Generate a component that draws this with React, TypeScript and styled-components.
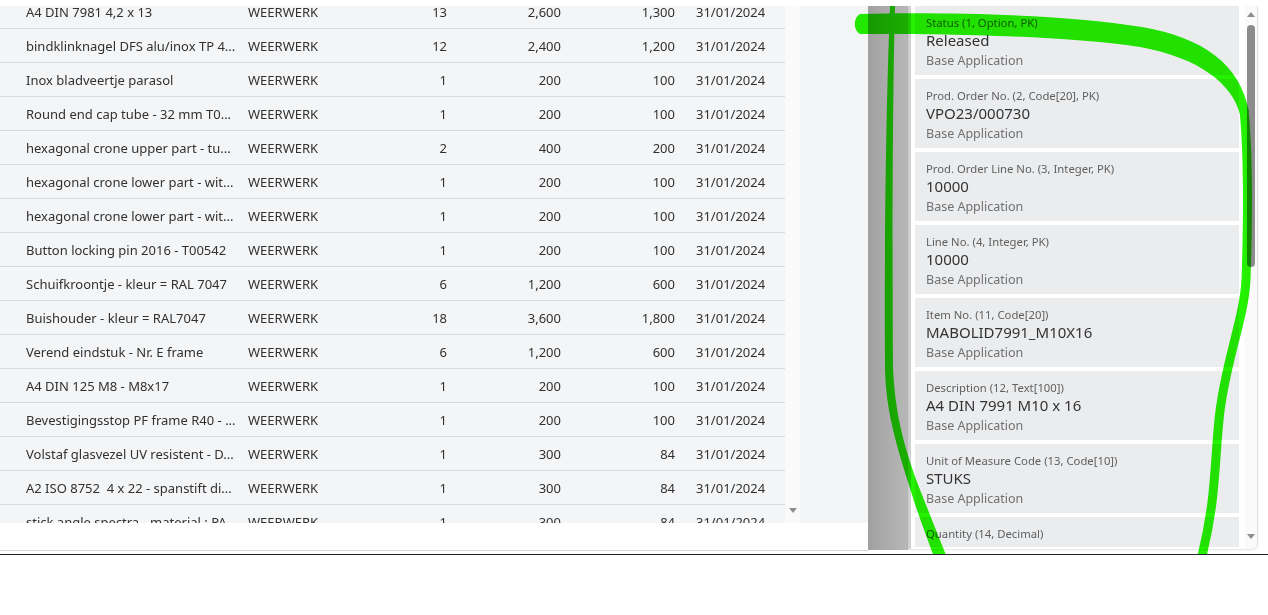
import styled, {createGlobalStyle} from "styled-components";

const GlobalStyle = createGlobalStyle`
  html, body {
    margin: 0;
    padding: 0;
    background: #fff;
  }
  body {
    font-family: "Noto Sans", "Open Sans", sans-serif;
    color: #323130;
  }
`;

const Page = styled.div`
  position: relative;
  width: 1268px;
  height: 615px;
  overflow: hidden;
  display: flex;
  flex-direction: column;
  background: #fff;
`;

const TopGap = styled.div`
  height: 6px;
  flex: none;
`;

const Workspace = styled.div`
  display: flex;
  height: 545px;
  flex: none;
`;

const ListPane = styled.div`
  width: 868px;
  display: flex;
  flex-direction: column;
`;

const ListBody = styled.div`
  height: 517px;
  display: flex;
  background: #f4f5f7;
`;

const Table = styled.div`
  width: 785px;
  overflow: hidden;
`;

// the list is scrolled a little, so the first row is cut at the top
const TableScroll = styled.div`
  margin-top: -11px;
`;

const Row = styled.div`
  display: grid;
  grid-template-columns: 222px 119px 80px 114px 114px 110px;
  align-items: center;
  height: 34px;
  box-sizing: border-box;
  padding-left: 26px;
  border-bottom: 1px solid #d7d8da;
  font-size: 13px;
  color: #323130;
`;

const Cell = styled.div<{ $align?: "left" | "right"; $pad?: number }>`
  text-align: ${p => p.$align ?? "left"};
  padding-left: ${p => p.$pad ?? 0}px;
  white-space: pre;
  overflow: hidden;
`;

const ScrollStrip = styled.div`
  width: 15px;
  background: #fafafa;
  display: flex;
  flex-direction: column;
  justify-content: flex-end;
  align-items: center;
  padding-bottom: 10px;
  box-sizing: border-box;
`;

const ArrowDown = styled.div`
  width: 0;
  height: 0;
  border-left: 4.5px solid transparent;
  border-right: 4.5px solid transparent;
  border-top: 5px solid #8e8e8e;
`;

const ArrowUp = styled.div`
  width: 0;
  height: 0;
  border-left: 4.5px solid transparent;
  border-right: 4.5px solid transparent;
  border-bottom: 5px solid #8e8e8e;
`;

const Filler = styled.div`
  flex: 1;
`;

const ListFooter = styled.div`
  height: 28px;
  box-sizing: border-box;
  border-bottom: 1px solid #d6d6d6;
  background: #fff;
`;

const Splitter = styled.div`
  width: 40px;
  height: 544px;
  background: linear-gradient(to right, #a0a0a0, #b8b8b8);
`;

const FieldPanel = styled.div`
  width: 350px;
  height: 543px;
  box-sizing: border-box;
  display: flex;
  background: #fff;
  border-left: 3px solid #cfd0d2;
  border-right: 1px solid #e2e2e2;
  border-bottom-right-radius: 6px;
  box-shadow: 0 1px 2px rgba(0, 0, 0, 0.12);
  overflow: hidden;
`;

const CardList = styled.div`
  width: 324px;
  height: 541px;
  margin-left: 4px;
  display: flex;
  flex-direction: column;
  gap: 4px;
  overflow: hidden;
`;

const Card = styled.div`
  flex: none;
  height: 69px;
  box-sizing: border-box;
  padding: 9px 11px 5px;
  background: #ebecee;
  display: flex;
  flex-direction: column;
`;

const FieldLabel = styled.div`
  font-size: 11.3px;
  line-height: 15px;
  color: #5f5f5f;
`;

const FieldValue = styled.div`
  font-size: 15px;
  line-height: 21px;
  min-height: 21px;
  color: #333;
`;

const FieldSource = styled.div`
  font-size: 12.5px;
  line-height: 19px;
  color: #707070;
`;

const PanelScrollbar = styled.div`
  width: 12px;
  margin-left: 6px;
  background: #fafafa;
  display: flex;
  flex-direction: column;
  align-items: center;
  padding: 6px 0 10px;
  box-sizing: border-box;
`;

const Thumb = styled.div`
  width: 8px;
  height: 242px;
  margin-top: 8px;
  border-radius: 4px;
  background: #8c8c8c;
`;

const BottomGap = styled.div`
  height: 3px;
  flex: none;
`;

const DarkRule = styled.div`
  height: 1px;
  flex: none;
  background: #1f232a;
`;

const Highlight = styled.svg`
  position: absolute;
  left: 0;
  top: 6px;
  width: 1268px;
  height: 548px;
  pointer-events: none;
  mix-blend-mode: multiply;
`;

interface Line {
    desc: string;
    qty: string;
    a: string;
    b: string;
}

const lines: Line[] = [
    {desc: "A4 DIN 7981 4,2 x 13", qty: "13", a: "2,600", b: "1,300"},
    {desc: "bindklinknagel DFS alu/inox TP 4...", qty: "12", a: "2,400", b: "1,200"},
    {desc: "Inox bladveertje parasol", qty: "1", a: "200", b: "100"},
    {desc: "Round end cap tube - 32 mm T0...", qty: "1", a: "200", b: "100"},
    {desc: "hexagonal crone upper part - tu...", qty: "2", a: "400", b: "200"},
    {desc: "hexagonal crone lower part - wit...", qty: "1", a: "200", b: "100"},
    {desc: "hexagonal crone lower part - wit...", qty: "1", a: "200", b: "100"},
    {desc: "Button locking pin 2016 - T00542", qty: "1", a: "200", b: "100"},
    {desc: "Schuifkroontje - kleur = RAL 7047", qty: "6", a: "1,200", b: "600"},
    {desc: "Buishouder - kleur = RAL7047", qty: "18", a: "3,600", b: "1,800"},
    {desc: "Verend eindstuk - Nr. E frame", qty: "6", a: "1,200", b: "600"},
    {desc: "A4 DIN 125 M8 - M8x17", qty: "1", a: "200", b: "100"},
    {desc: "Bevestigingsstop PF frame R40 - ...", qty: "1", a: "200", b: "100"},
    {desc: "Volstaf glasvezel UV resistent - D...", qty: "1", a: "300", b: "84"},
    {desc: "A2 ISO 8752  4 x 22 - spanstift di...", qty: "1", a: "300", b: "84"},
    {desc: "stick angle spectra - material : PA...", qty: "1", a: "300", b: "84"},
];

const fields = [
    {label: "Status (1, Option, PK)", value: "Released"},
    {label: "Prod. Order No. (2, Code[20], PK)", value: "VPO23/000730"},
    {label: "Prod. Order Line No. (3, Integer, PK)", value: "10000"},
    {label: "Line No. (4, Integer, PK)", value: "10000"},
    {label: "Item No. (11, Code[20])", value: "MABOLID7991_M10X16"},
    {label: "Description (12, Text[100])", value: "A4 DIN 7991 M10 x 16"},
    {label: "Unit of Measure Code (13, Code[10])", value: "STUKS"},
    {label: "Quantity (14, Decimal)", value: ""},
];

const GREEN = "#24f200";

const Scribble = () => (
    <Highlight viewBox="0 6 1268 548">
        {/* top sweep, thick on the left and thinning as it bends down */}
        <path
            fill={GREEN}
            d="M860 14 C 940 12, 1060 14, 1142 27 C 1204 38, 1240 64, 1249 112 L 1240 114 C 1232 84, 1200 58, 1140 47 C 1060 35, 940 34, 860 34 C 853 30, 853 18, 860 14 Z"
        />
        {/* right side going down */}
        <path
            fill="none"
            stroke={GREEN}
            strokeWidth={9}
            strokeLinecap="round"
            d="M1244 110 C 1248 150, 1248 220, 1246 280 C 1244 320, 1224 365, 1219 420 C 1214 470, 1216 500, 1201 560"
        />
        {/* left side, thin at the top and wider lower down */}
        <path
            fill={GREEN}
            d="M890 6 L 895 6 C 893 80, 892 220, 893 368 C 895 410, 902 440, 917 482 C 930 515, 940 540, 948 560 L 935 560 C 928 540, 918 515, 908 482 C 895 440, 886 410, 885 368 C 884 220, 887 80, 890 6 Z"
        />
    </Highlight>
);

export default function App() {
    return (
        <>
            <GlobalStyle />
            <Page>
                <TopGap />
                <Workspace>
                    <ListPane>
                        <ListBody>
                            <Table>
                                <TableScroll>
                                    {lines.map((l, i) => (
                                        <Row key={i}>
                                            <Cell>{l.desc}</Cell>
                                            <Cell>WEERWERK</Cell>
                                            <Cell $align="right">{l.qty}</Cell>
                                            <Cell $align="right">{l.a}</Cell>
                                            <Cell $align="right">{l.b}</Cell>
                                            <Cell $pad={21}>31/01/2024</Cell>
                                        </Row>
                                    ))}
                                </TableScroll>
                            </Table>
                            <ScrollStrip>
                                <ArrowDown />
                            </ScrollStrip>
                            <Filler />
                        </ListBody>
                        <ListFooter />
                    </ListPane>
                    <Splitter />
                    <FieldPanel>
                        <CardList>
                            {fields.map(f => (
                                <Card key={f.label}>
                                    <FieldLabel>{f.label}</FieldLabel>
                                    <FieldValue>{f.value}</FieldValue>
                                    <FieldSource>Base Application</FieldSource>
                                </Card>
                            ))}
                        </CardList>
                        <PanelScrollbar>
                            <ArrowUp />
                            <Thumb />
                            <Filler />
                            <ArrowDown />
                        </PanelScrollbar>
                    </FieldPanel>
                </Workspace>
                <BottomGap />
                <DarkRule />
                <Scribble />
            </Page>
        </>
    );
}
